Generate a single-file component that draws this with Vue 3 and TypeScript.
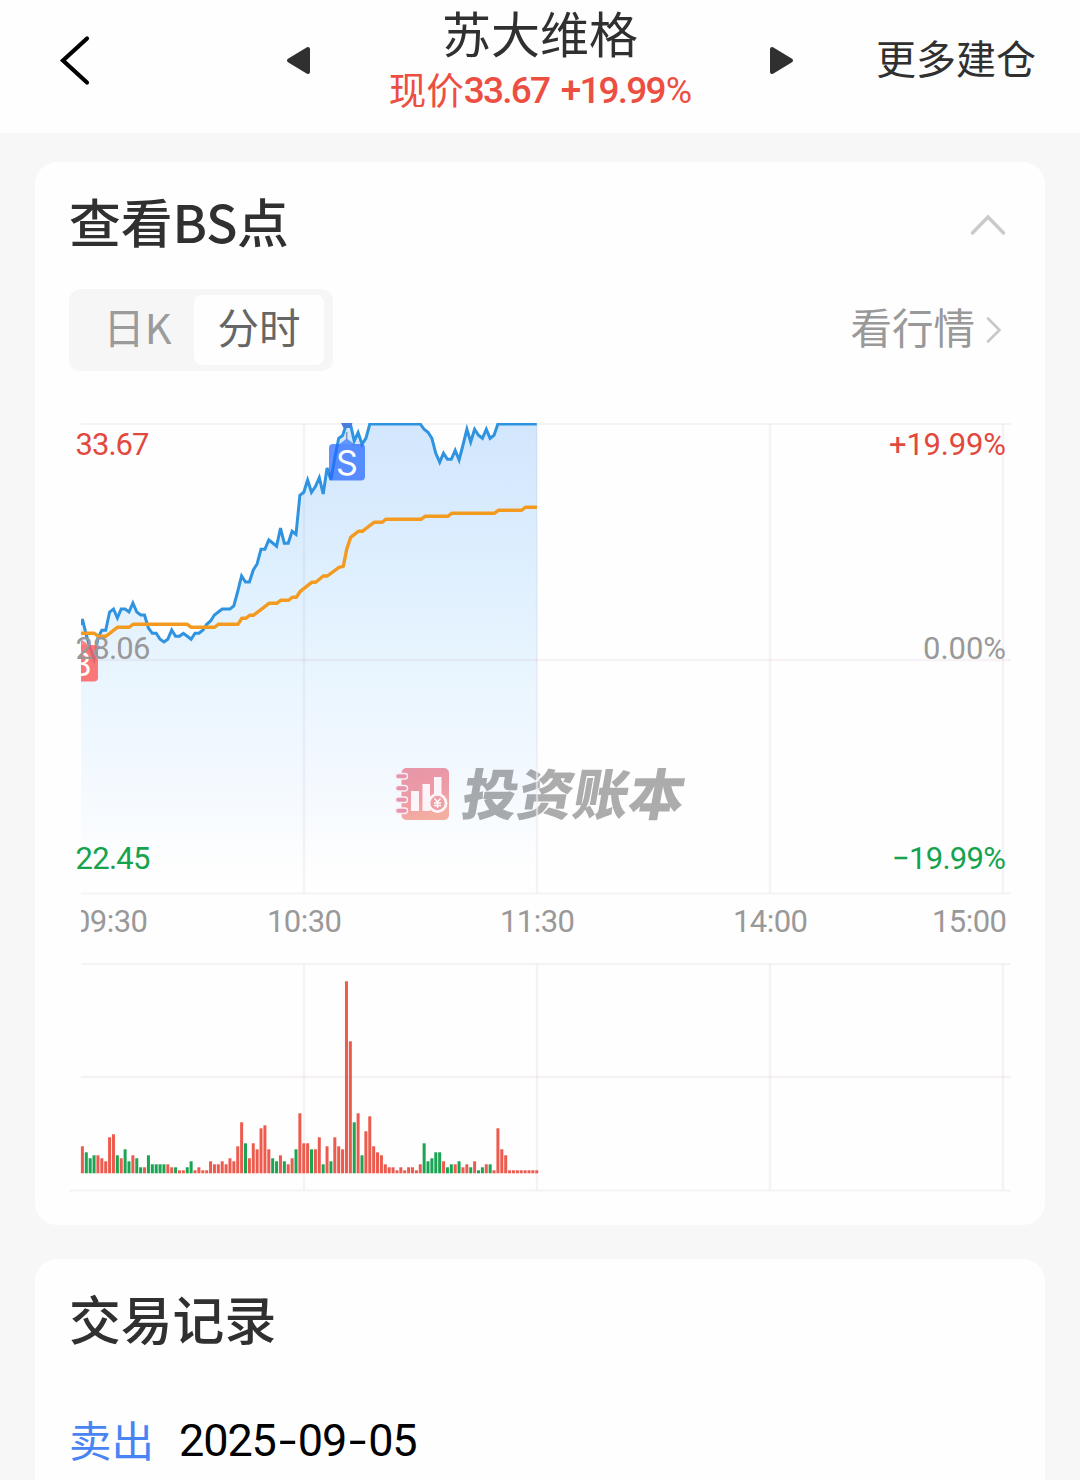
<script setup lang="ts">
// One slot per trading minute, 60 minutes between two grid lines.
const STEP = 233 / 60
const X0 = 82.4
const CEIL = 424

const price: number[] = [
  619, 635, 648, 659, 638, 630.3, 630.3, 612, 609, 618, 609, 609, 612, 603, 612, 615, 615, 628, 633.3, 633.3,
  639.3, 642, 639.3, 630, 636.3, 636.3, 633.3, 636.3, 639.3, 633.3, 633.3, 630.3, 624.3, 621, 615, 612, 609, 609, 609, 606,
  591.5, 576, 582, 582, 570, 564, 549.3, 549.3, 540, 543, 546.3, 528, 543.3, 543.3, 531.3, 534.3, 495.3, 492.3, 480, 492.3,
  486.5, 477.6, 494, 468, 480, 458, 438.3, 435.6, CEIL, CEIL, 441, 432.6, 444.3, 438.3, CEIL, CEIL, CEIL, CEIL, CEIL, CEIL,
  CEIL, CEIL, CEIL, CEIL, CEIL, CEIL, CEIL, CEIL, 429.3, 432.3, 438.3, 453.3, 462.3, 453.3, 459.3, 459.3, 450.3, 460, 445, 429.3,
  442, 429.3, 435.3, 438.3, 429.3, 438.3, 435.3, CEIL, CEIL, CEIL, CEIL, CEIL, CEIL, CEIL, CEIL, CEIL, CEIL, CEIL,
]

const average: [number, number][] = [
  [81, 633.3], [94.3, 633.3], [98, 636.3], [105.7, 636.3], [109.7, 633.3], [117.3, 627.3], [129.3, 627.3],
  [133, 624.3], [187.3, 624.3], [191.3, 627.3], [214.7, 627.3], [218.3, 624.3], [238, 624.3], [241.7, 618.3],
  [245.7, 618.3], [249.7, 615.3], [253.3, 615.3], [257.3, 612.3], [269, 603.3], [276.7, 603.3], [280.7, 600.3],
  [288.7, 600.3], [292.3, 597.3], [296.3, 597.3], [300, 591.7], [311.7, 582.3], [315.7, 582.3], [323.3, 576],
  [327.3, 576], [339, 567.3], [343.3, 566.3], [346.7, 549.3], [350.7, 537.3], [358.3, 531.3], [362.3, 531.3],
  [374, 522.3], [382.3, 522.3], [385.7, 519.3], [421, 519.3], [425, 516.3], [447.7, 516.3], [451.7, 513.3],
  [494.3, 513.3], [498.3, 510.3], [521.7, 510.3], [525.3, 507.3], [537, 507.3],
]

// r: bought at the ask, g: sold at the bid; the number is the volume in units
const volume = (
  'r9 g7 g5 g6 r6 r5 r4 r12 r13 g6 r5 g8 g4 r6 g5 g2 r2 g6 g3 g3 g3 g3 r3 r2 g2 r1 r1 g2 g4 r1 ' +
  'r2 r1 r1 r4 r3 r3 r4 r3 r5 r4 r9 r17 g10 r5 r10 r8 r15 r16 r8 g5 g4 r6 g4 r3 r5 g8 r20 r10 r10 ' +
  'g8 r8 r12 g3 r9 g4 r12 r9 r8 r64 r44 g17 r20 g6 r14 r19 r9 r7 r6 r3 r2 r2 r1 r2 r1 r2 r2 r1 r3 ' +
  'g10 g4 g5 g7 g7 r4 g2 g3 r3 g4 r2 r3 g2 r4 g1 g2 r3 g3 r1 r15 r8 r6 r1 r1 r1 r1 r1 r1 r1 r1'
).split(' ').map((t, i) => ({
  x: X0 + i * STEP - 1.5,
  h: Number(t.slice(1)) * 3,
  up: t[0] === 'r',
}))

const pricePts = price.map((y, i) => `${(X0 + i * STEP).toFixed(1)},${y}`).join(' ')
const areaPts = `81,893 81,624 ${pricePts} 537,424 537,893`
const avgPts = average.map((p) => p.join(',')).join(' ')
const columns = [304, 537, 770, 1003]
</script>

<template>
  <div class="page">
    <header class="bar">
      <svg class="back" width="34" height="54" viewBox="58 33 34 54">
        <path d="M87 38.5 L63 60.5 L87 82.5" fill="none" stroke="#000" stroke-width="4.2" stroke-linecap="round" stroke-linejoin="miter" />
      </svg>
      <svg class="prev" width="26" height="30" viewBox="286 46 26 30">
        <path d="M308 49 L289 60.5 L308 72 Z" fill="#303030" stroke="#303030" stroke-width="4" stroke-linejoin="round" />
      </svg>
      <div class="title">
        <div class="name">苏大维格</div>
        <div class="quote"><span>现价</span><b>33.67 +19.99</b><i>%</i></div>
      </div>
      <svg class="next" width="26" height="30" viewBox="768 46 26 30">
        <path d="M772 49 L791 60.5 L772 72 Z" fill="#303030" stroke="#303030" stroke-width="4" stroke-linejoin="round" />
      </svg>
      <div class="more">更多建仓</div>
    </header>

    <section class="card chart-card">
      <div class="head">
        <h2>查看<span>BS</span>点</h2>
        <svg class="fold" width="36" height="22" viewBox="0 0 36 22">
          <path d="M2.5 19 L18 3 L33.5 19" fill="none" stroke="#cacaca" stroke-width="3.4" stroke-linecap="round" />
        </svg>
      </div>
      <div class="tools">
        <div class="tabs">
          <div class="tab day">日<span>K</span></div>
          <div class="tab on">分时</div>
        </div>
        <div class="link">
          <span>看行情</span>
          <svg width="18" height="28" viewBox="0 0 18 28">
            <path d="M3 2.5 L14.5 14 L3 25.5" fill="none" stroke="#c8c8c8" stroke-width="2.6" stroke-linecap="round" />
          </svg>
        </div>
      </div>

      <svg class="chart" width="944" height="790" viewBox="69 410 944 790">
        <defs>
          <linearGradient id="fill" gradientUnits="userSpaceOnUse" x1="0" y1="424" x2="0" y2="870">
            <stop offset="0" stop-color="#d2e6fd" />
            <stop offset="0.28" stop-color="#dceefe" />
            <stop offset="0.55" stop-color="#e9f5fe" />
            <stop offset="0.8" stop-color="#f3f9ff" />
            <stop offset="1" stop-color="#fefefe" />
          </linearGradient>
          <linearGradient id="logo" x1="0" y1="0" x2="0.3" y2="1">
            <stop offset="0" stop-color="#e795aa" />
            <stop offset="0.6" stop-color="#ed9ba5" />
            <stop offset="1" stop-color="#f3ada1" />
          </linearGradient>
          <clipPath id="plot"><rect x="81" y="423" width="930" height="540" /></clipPath>
        </defs>

        <polygon :points="areaPts" fill="url(#fill)" />

        <g class="brand">
          <rect x="401.500" y="768" width="47.500" height="52" rx="5" fill="url(#logo)" />
          <g fill="#e795aa" stroke="#f8eff6" stroke-width="1.400">
            <rect x="395.500" y="773.500" width="12" height="5.500" rx="2.700" />
            <rect x="395.500" y="785.500" width="12" height="5.500" rx="2.700" />
            <rect x="395.500" y="797" width="12" height="5.500" rx="2.700" />
            <rect x="395.500" y="808" width="12" height="5.500" rx="2.700" />
          </g>
          <g fill="#fbf5fa">
            <rect x="411" y="791" width="8" height="20" />
            <rect x="422.500" y="784" width="7.500" height="27" />
            <rect x="434" y="777" width="7.500" height="26" />
            <circle cx="437.500" cy="803" r="10" />
          </g>
          <circle cx="437.500" cy="803" r="7.200" fill="#eda0a5" />
          <path d="M434.500 798.500 L437.500 802 L440.500 798.500 M437.500 802 V808 M434 803 H441 M434 805.500 H441" fill="none" stroke="#fff" stroke-width="1.300" />
          <text transform="translate(459.500 815) skewX(-10)" textLength="222" lengthAdjust="spacingAndGlyphs">投资账本</text>
        </g>

        <g class="grid">
          <path d="M81 424 H1011 M81 893.500 H1011 M81 964 H1011 M69 1190.500 H1011" class="thin" />
          <path d="M81 660 H1011 M81 1077 H1011" />
          <path v-for="x in columns" :key="x" :d="`M${x} 424 V893 M${x} 964 V1190`" />
          <path d="M537 766 V822" class="over" />
        </g>

        <g clip-path="url(#plot)">
          <polyline :points="`81,625 ${pricePts}`" class="price" />
          <polyline :points="avgPts" class="avg" />
          <g>
            <path d="M75 645 L82 640 L89 645 Z" fill="#ff6b6b" opacity="0.800" />
            <rect x="63" y="645" width="35" height="36.500" rx="4" fill="#ff5c5a" opacity="0.820" />
            <text class="mark" x="81" y="676" style="font-size: 32px">B</text>
          </g>
          <g>
            <path d="M341 423 H352.500 L350 428 H343.500 Z" fill="#477fdf" />
            <path d="M346.700 432 V440" stroke="#8294b5" stroke-width="1.500" />
            <path d="M339.500 444 L346.700 438.500 L354 444 Z" fill="#6097fd" />
            <rect x="329" y="444" width="36" height="36.500" rx="4" fill="#2468ff" opacity="0.720" />
            <text class="mark" x="347" y="474.500">S</text>
          </g>
          <text class="label" x="73" y="932" textLength="75">09:30</text>
        </g>

        <g class="label">
          <text x="75.500" y="455" class="up" textLength="74">33.67</text>
          <text x="75.500" y="659" textLength="75">28.06</text>
          <text x="75.500" y="869" class="down" textLength="75">22.45</text>
          <text x="889" y="455" class="up" textLength="117">+19.99%</text>
          <text x="923" y="659" textLength="83">0.00%</text>
          <text x="892" y="869" class="down" textLength="114">−19.99%</text>
          <text x="267" y="932" textLength="75">10:30</text>
          <text x="500" y="932" textLength="75">11:30</text>
          <text x="733" y="932" textLength="75">14:00</text>
          <text x="932" y="932" textLength="75">15:00</text>
        </g>

        <rect
          v-for="(v, i) in volume" :key="i"
          :x="v.x" :y="1173.300 - v.h" width="3" :height="v.h"
          :fill="v.up ? '#ec5b4e' : '#1aa453'"
        />
      </svg>
    </section>

    <section class="card records">
      <h2>交易记录</h2>
      <div class="row">
        <span class="sell">卖出</span>
        <span class="date">2025<em>-</em>09<em>-</em>05</span>
      </div>
    </section>
  </div>
</template>

<style>
body {
  margin: 0;
  background: #f7f7f7;
}
</style>

<style scoped>
.page {
  width: 1080px;
  height: 1480px;
  overflow: hidden;
  background: #f7f7f7;
  font-family: "Noto Sans CJK SC", sans-serif;
  color: #303030;
}
.bar {
  height: 133px;
  box-sizing: border-box;
  background: #fefefe;
  display: flex;
  align-items: flex-start;
}
.back { margin: 33px 0 0 58px; }
.prev { margin: 46px 0 0 194px; }
.next { margin: 46px 0 0 0; }
.title {
  width: 456px;
  text-align: center;
  white-space: nowrap;
}
.name {
  height: 68px;
  line-height: 64px;
  font-size: 49px;
}
.quote {
  height: 44px;
  line-height: 44px;
  font-size: 37.5px;
  color: #ec4f42;
  display: flex;
  justify-content: center;
}
.quote span { line-height: 39px; }
.quote b {
  font-family: Roboto, sans-serif;
  font-weight: 500;
  font-size: 37px;
  line-height: 46px;
  letter-spacing: -1.8px;
  word-spacing: 4px;
}
.quote i {
  font-family: Roboto, sans-serif;
  font-style: normal;
  font-size: 36px;
  line-height: 46px;
  padding-left: 1px;
  letter-spacing: -1px;
}
.more {
  margin: 27px 0 0 82px;
  font-size: 40px;
  line-height: 60px;
  white-space: nowrap;
}
.card {
  margin: 29px 35px 0;
  background: #fefefe;
  border-radius: 22px;
  box-sizing: border-box;
  padding: 0 34px;
}
.chart-card { height: 1063px; }
h2 {
  margin: 0;
  font-weight: 500;
  font-size: 51.8px;
  line-height: 76px;
}
h2 span { letter-spacing: -0.4px; }
.head {
  height: 127px;
  padding-top: 21px;
  box-sizing: border-box;
  display: flex;
  justify-content: space-between;
}
.fold { margin: 31px 5px 0 0; }
.tools {
  height: 82px;
  display: flex;
  justify-content: space-between;
}
.tabs {
  width: 264px;
  height: 82px;
  padding: 6px 9px 6px 0;
  box-sizing: border-box;
  border-radius: 12px;
  background: #f6f6f6;
  display: flex;
}
.tab {
  line-height: 62px;
  font-size: 41.5px;
  text-align: center;
}
.day {
  width: 125px;
  padding-left: 12px;
  box-sizing: border-box;
  color: #9b9b9b;
}
.on {
  width: 130px;
  height: 70px;
  border-radius: 8px;
  background: #fefefe;
  color: #666;
}
.link {
  display: flex;
  align-items: center;
  height: 78px;
  font-size: 41.5px;
  color: #999;
}
.link span { margin-top: -4px; }
.link svg { margin: 4px 8px 0 10px; }
.chart {
  display: block;
  margin-top: 39px;
}
.grid path {
  fill: none;
  stroke: rgba(130, 40, 90, 0.055);
  stroke-width: 2.4;
}
.grid .thin {
  stroke: #f5f4f5;
  stroke-width: 2;
}
.grid .over {
  stroke: rgba(245, 243, 248, 0.6);
}
.price {
  fill: none;
  stroke: #2f93e0;
  stroke-width: 3;
}
.avg {
  fill: none;
  stroke: #f39a20;
  stroke-width: 3.4;
  stroke-linejoin: round;
}
.mark {
  font-family: Inter, sans-serif;
  font-size: 34px;
  fill: #fff;
  text-anchor: middle;
}
.label {
  font-family: Roboto, sans-serif;
  font-size: 31px;
  fill: #999;
}
.label .up { fill: #e2493e; }
.label .down { fill: #16a34e; }
.brand text {
  font-size: 55px;
  font-weight: 900;
  fill: rgba(0, 0, 0, 0.32);
}
.records {
  margin-top: 34px;
  height: 260px;
  padding-top: 21px;
}
.row {
  display: flex;
  align-items: center;
  margin-top: 53px;
  height: 64px;
}
.sell {
  width: 110px;
  font-size: 42.5px;
  line-height: 60px;
  margin-top: -5px;
  color: #4884f3;
}
.date {
  font-family: Roboto, sans-serif;
  font-size: 45px;
  line-height: 64px;
  letter-spacing: -1.1px;
  color: #000;
}
.date em {
  display: inline-block;
  font-style: normal;
  width: 22px;
  text-align: center;
  transform: scaleX(1.4);
}
</style>
